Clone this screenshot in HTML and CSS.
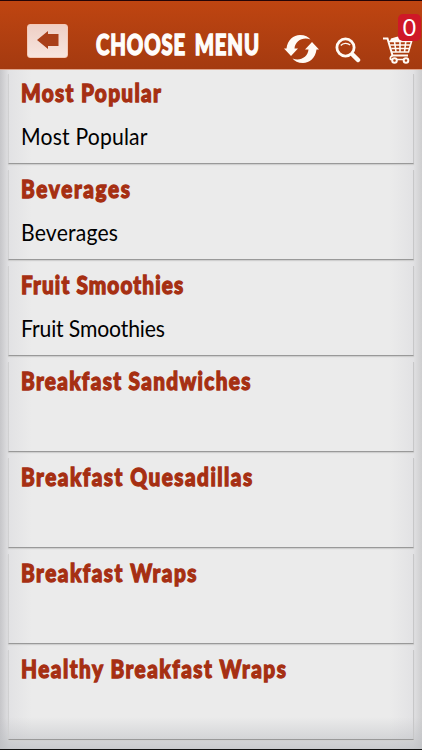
FILE: index.html
```
<!DOCTYPE html>
<html lang="en">
<head>
<meta charset="utf-8">
<title>Choose Menu</title>
<link rel="stylesheet" href="styles.css">
</head>
<body>
<header class="bar">
  <button class="back" aria-label="Back"><svg width="22" height="18" viewBox="0 0 22 18"><path d="M0 9 11 0V3H21.5V15H11V18Z" fill="#a9401a"/></svg></button>
  <h1><span>CHOOSE MENU</span></h1>
  <svg class="refresh" width="36" height="30" viewBox="0 0 36 30" fill="#fffaf5"><path id="arrow" d="M0 14.500H2.500C3.500 6 9.500 1 16 1c5 0 8.500 1.800 10.500 4.500C19 2.500 11 7 10.500 14.500H14L7 22Z"/><use href="#arrow" transform="rotate(180 17.500 15)"/></svg>
  <svg class="search" width="26" height="26" viewBox="0 0 26 26" fill="none" stroke="#fffaf5"><circle cx="10.500" cy="10.500" r="8.600" stroke-width="2.800"/><path d="M5.800 8.500C8 5.800 12.500 5.500 15.200 8" stroke-width="1.300"/><path d="m18 18 5 5" stroke-width="4.500" stroke-linecap="round"/></svg>
  <div class="cart">
    <svg width="30" height="30" viewBox="0 0 30 30" fill="none" stroke="#fffaf5"><path d="M0 3.500H4.500L9.500 20.500H25" stroke-width="2"/><path d="M7 6 8 3.500 13 2l5-1 1 5Z" fill="#fffaf5" stroke="none"/><path d="M6 6.500H28.500L25.500 17H9M7.200 10H27.300M8.300 13.500H26.300M11.500 6.500l1.500 10.500M17 6.500V17M22.800 6.500 21.500 17M9.500 20.500q-3 1.500-2 4h18" stroke-width="1.600"/><circle cx="11.500" cy="25.500" r="2.300" fill="#ae4014" stroke-width="2"/><circle cx="23" cy="25.500" r="2.300" fill="#ae4014" stroke-width="2"/></svg>
    <span class="badge">0</span>
  </div>
</header>
<main>
  <section><h2><span>Most Popular</span></h2><p><span>Most Popular</span></p></section>
  <section class="loose"><h2><span>Beverages</span></h2><p><span>Beverages</span></p></section>
  <section class="tight"><h2><span>Fruit Smoothies</span></h2><p><span>Fruit Smoothies</span></p></section>
  <section><h2><span>Breakfast Sandwiches</span></h2></section>
  <section class="wide"><h2><span>Breakfast Quesadillas</span></h2></section>
  <section class="wide"><h2><span>Breakfast Wraps</span></h2></section>
  <section class="wide"><h2><span>Healthy Breakfast Wraps</span></h2></section>
</main>
</body>
</html>
```
FILE: styles.css
```
* { box-sizing: border-box; }
body {
  margin: 0;
  height: 750px;
  overflow: hidden;
  display: flex;
  flex-direction: column;
  font-family: Lato, sans-serif;
  border-bottom: 1px solid #111;
}
.bar {
  height: 70px;
  flex: none;
  display: flex;
  align-items: flex-start;
  background: linear-gradient(#bf4511, #a43a10);
  border-top: 1px solid #250406;
  border-bottom: 1px solid #dfa58d;
}
.back {
  width: 41px;
  height: 34px;
  margin: 23px 0 0 27px;
  padding: 0 0 2px 1px;
  border: 1px solid #f5c9b6;
  border-radius: 3px;
  background: linear-gradient(#eecfc5, #f7e5df);
  display: flex;
  align-items: center;
  justify-content: center;
}
h1, h2, p { margin: 0; white-space: nowrap; }
h1 span, h2 span, p span { display: inline-block; transform-origin: left; }
h1 {
  width: 188px;
  margin: 25px 0 0 28px;
  font-size: 28px;
  line-height: 36px;
  font-weight: 900;
  color: #fffdfb;
}
h1 span {
  transform: scaleX(.725);
  letter-spacing: 1.200px;
  word-spacing: 4px;
  -webkit-text-stroke: 1.400px;
}
.refresh { margin: 33px 0 0 0; }
.search { margin: 36px 0 0 15px; }
.cart { position: relative; margin: 34px 0 0 22px; }
.cart svg { display: block; }
.badge {
  position: absolute;
  left: 15px;
  top: -21px;
  width: 23px;
  height: 27px;
  border-radius: 5px;
  background: #cf1827;
  color: #fff;
  font-size: 23px;
  line-height: 27px;
  text-align: center;
}
main {
  flex: 1;
  min-height: 0;
  overflow: hidden;
  padding: 4px 8px 0;
  background:
    linear-gradient(to top, rgba(190,192,196,.75), transparent 32px),
    linear-gradient(to right, #c6c6c9, #e2e2e4 9px, #ebebeb 32px, #ebebeb 390px, #e2e2e4 413px, #cececf);
}
section {
  height: 90px;
  margin-bottom: 6px;
  padding: 0 0 0 12px;
  border-bottom: 1px solid #999;
  border-left: 1px solid #d0d0d1;
  border-right: 1px solid #c7c7c8;
  box-shadow: 0 1px 1px #cfcfcf;
}
h2 {
  height: 36px;
  padding-top: 1px;
  font-size: 25px;
  line-height: 34px;
  font-weight: 900;
  color: #a62f12;
}
h2 span {
  transform: scaleX(.83);
  letter-spacing: 1.600px;
  -webkit-text-stroke: 1.300px;
}
.loose h2 span { letter-spacing: 2px; }
.wide h2 span { letter-spacing: 1.800px; }
.tight h2 span { letter-spacing: 1.350px; }
p {
  margin-top: 11px;
  font-size: 23px;
  line-height: 30px;
  color: #000;
}
p span { transform: scaleX(.92); letter-spacing: .2px; }
.tight p span { letter-spacing: -.15px; }
```
